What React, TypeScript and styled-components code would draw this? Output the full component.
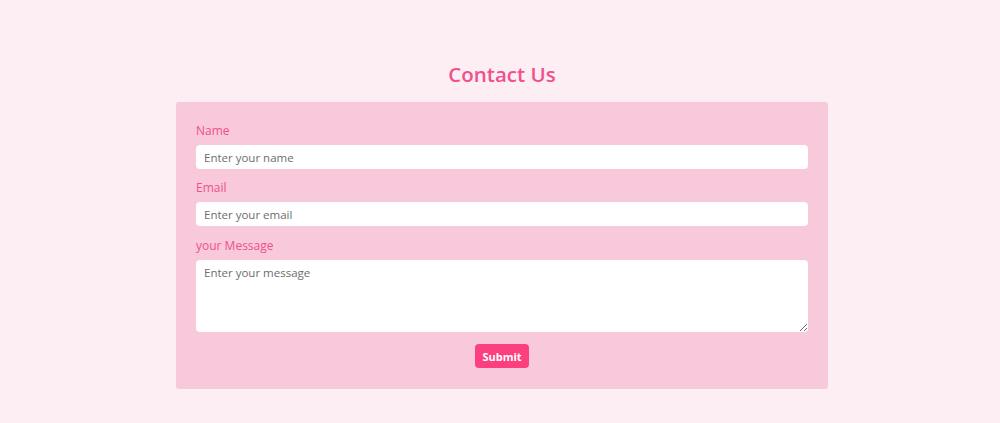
import React from 'react'
import styled, { createGlobalStyle } from 'styled-components'

const font = '"Open Sans", "Noto Sans", sans-serif'

const Global = createGlobalStyle`
  html, body {
    margin: 0;
    padding: 0;
    background: #fdeef4;
    font-family: ${font};
  }
  * { box-sizing: border-box; }
`

const Page = styled.div`
  display: flex;
  flex-direction: column;
  align-items: center;
  padding: 59px 0 0 4px;
  min-height: 423px;
`

const Title = styled.h1`
  margin: 0 0 13px;
  font-size: 20.5px;
  line-height: 30px;
  font-weight: 600;
  color: #f0508b;
`

const Card = styled.form`
  width: 652px;
  background: #f7c9db;
  border-radius: 3px;
  padding: 20px 20px 21px;
  display: flex;
  flex-direction: column;
`

const Label = styled.label<{ $gap?: number }>`
  font-size: 12px;
  line-height: 18px;
  color: #f0508b;
  margin-top: ${p => p.$gap ?? 0}px;
  margin-bottom: 5px;
`

const Input = styled.input`
  height: 24px;
  border: none;
  border-radius: 4px;
  background: #fff;
  padding: 0 8px;
  font-family: ${font};
  font-size: 11.5px;
  margin-bottom: 10px;
  outline: none;
  &::placeholder { color: #6d6d6d; }
`

const TextArea = styled.textarea`
  height: 72px;
  border: none;
  border-radius: 4px;
  background: #fff;
  padding: 5px 8px;
  font-family: ${font};
  font-size: 11.5px;
  resize: vertical;
  outline: none;
  &::placeholder { color: #6d6d6d; }
`

const Submit = styled.button`
  align-self: center;
  margin-top: 12px;
  height: 24px;
  padding: 0 7px;
  border: none;
  border-radius: 4px;
  background: #fc3f7e;
  color: #fff;
  font-family: ${font};
  font-size: 11px;
  font-weight: 700;
`

export default function App() {
  return (
    <>
      <Global />
      <Page>
        <Title>Contact Us</Title>
        <Card onSubmit={e => e.preventDefault()}>
          <Label>Name</Label>
          <Input placeholder="Enter your name" />
          <Label>Email</Label>
          <Input placeholder="Enter your email" />
          <Label $gap={1}>your Message</Label>
          <TextArea placeholder="Enter your message" />
          <Submit type="submit">Submit</Submit>
        </Card>
      </Page>
    </>
  )
}
